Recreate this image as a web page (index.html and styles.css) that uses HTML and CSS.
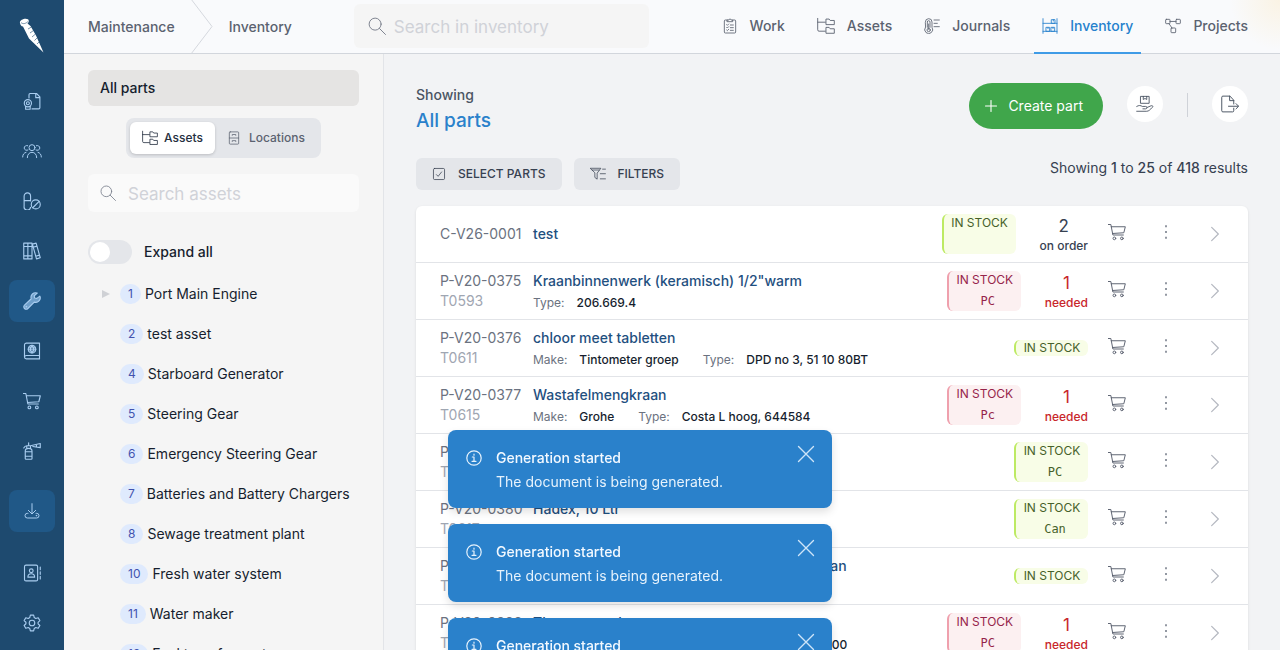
FILE: index.html
```html
<!DOCTYPE html>
<html lang="en">
<head>
<meta charset="utf-8">
<title>Inventory</title>
<link rel="stylesheet" href="styles.css">
</head>
<body>
<svg class="sprite" aria-hidden="true">
  <symbol id="cert" viewBox="0 0 24 24"><path d="M8 8V3.5A1.5 1.5 0 0 1 9.500 2H18l4.500 4.500V21a1.500 1.500 0 0 1-1.500 1.500h-9M17 2.500V7.500h5"/><circle cx="6.500" cy="15" r="4.800"/><circle cx="6.500" cy="15" r="2"/><path d="M3.500 19v4h6v-4"/></symbol>
  <symbol id="users" viewBox="0 0 30 24"><circle cx="15" cy="7" r="4.500"/><path d="M8 22c0-5 3-8 7-8s7 3 7 8M9 10.500A3.700 3.700 0 1 1 8.500 4M21 10.500A3.700 3.700 0 1 0 21.500 4M1 21c0-3.500 2-6.500 5-7M29 21c0-3.500-2-6.500-5-7"/></symbol>
  <symbol id="pills" viewBox="0 0 24 24"><path d="M10 20.500A4.300 4.300 0 0 1 1.500 19V5.500a4.300 4.300 0 0 1 8.600 0V12M1.500 11.500h8.600"/><circle cx="17" cy="16.500" r="6"/><path d="M13 21l8.500-8.500"/></symbol>
  <symbol id="books" viewBox="0 0 24 24"><path d="M1 1.500h5.500v21H1zM6.500 1.500H12v21H6.500zM1 6h11M1 18.500h11M12.500 2.800l5-1.300 5.500 19.500-5 1.500zM13.500 7l5-1.500M17 19l5-1.500"/></symbol>
  <symbol id="wrench" viewBox="0 0 24 24"><path fill="#6f9fca" d="M22.500 5.500l-4 3-3-.500-.500-3 4-3.500a6 6 0 0 0-8 7.500L2 17.500a3 3 0 0 0 4.500 4.500l8.500-8.500a6 6 0 0 0 7.500-8z"/><circle cx="4.500" cy="19.500" r=".5"/></symbol>
  <symbol id="passport" viewBox="0 0 24 24"><path d="M22 18V1.500H4.500A2.500 2.500 0 0 0 2 4v16a2.500 2.500 0 0 0 2.500 2.500H22V18H4.500A2.500 2.500 0 0 0 2 20"/><circle cx="12" cy="9.500" r="5"/><path d="M7 9.500h10M12 4.500c-3 3-3 7 0 10M12 4.500c3 3 3 7 0 10M8 7h8M8 12h8"/></symbol>
  <symbol id="cart" viewBox="0 0 24 24"><path d="M.5 2h3.300l2.700 14h14M4.300 5h18.800l-2 8-15.200 1"/><circle cx="8.500" cy="20.500" r="1.800"/><circle cx="18.500" cy="20.500" r="1.800"/></symbol>
  <symbol id="spray" viewBox="0 0 24 24"><path d="M3 22V12c0-2 1.500-3.500 4.500-3.500S12 10 12 12v10a1 1 0 0 1-1 1H4a1 1 0 0 1-1-1zM3 13h9M3 19h9M5 8.500V5h5v3.500M1 8c1-2 3-3 4-3M7.500 5V1M10 5l13-3v5.500L13 6M18 3.500V6.500"/></symbol>
  <symbol id="download" viewBox="0 0 24 24"><path d="M12 1v15M6.500 11l5.500 5.500 5.500-5.500M6 15.500H5a3.500 3.500 0 0 0 0 7h14a3.500 3.500 0 0 0 0-7h-1"/><circle cx="18.500" cy="19" r=".5"/></symbol>
  <symbol id="contact" viewBox="0 0 24 24"><rect x="2" y="1.500" width="17.500" height="21" rx="2"/><circle cx="11" cy="9" r="2.500"/><path d="M6.500 17.500c0-3 2-4.500 4.500-4.500s4.500 1.500 4.500 4.500zM23 4v3.500M23 10.300v3.500M23 16.500V20"/></symbol>
  <symbol id="gear" viewBox="0 0 24 24"><circle cx="12" cy="12" r="3.700"/><path d="M9.800 1.500h4.400l.8 3.300 2 1.200 3.300-1 2.200 3.800-2.400 2.300v2l2.400 2.200-2.200 3.800-3.300-1-2 1.200-.8 3.200H9.800L9 19.300l-2-1.200-3.300 1-2.200-3.800L3.900 13v-2L1.500 8.800 3.700 5 7 6l2-1.200z"/></symbol>
  <symbol id="search" viewBox="0 0 24 24"><circle cx="9.500" cy="9.500" r="8"/><path d="M15.300 15.300l8 8"/></symbol>
  <symbol id="clipboard" viewBox="0 0 24 24"><path d="M8 3H5a1.500 1.500 0 0 0-1.500 1.500V21A1.500 1.500 0 0 0 5 22.500h14a1.500 1.500 0 0 0 1.500-1.500V4.500A1.500 1.500 0 0 0 19 3h-3M8 5.500h8V3h-2.500a1.500 1.500 0 0 0-3 0H8zM7 10l1 1 2-2M12.500 10.500H17M7 14l1 1 2-2M12.500 14.500H17M7 18l1 1 2-2M12.500 18.500H17"/></symbol>
  <symbol id="tree" viewBox="0 0 26 24"><path d="M1 1v16.500a2 2 0 0 0 2 2h9M1 6.500h11M13.500 2h4l1.500 2h6v6H13.500zM13.500 14h4l1.500 2h6v6.500H13.500z"/></symbol>
  <symbol id="thermo" viewBox="0 0 24 24"><path d="M2 6a5 5 0 0 1 10 0v8a6 6 0 1 1-10 0zM5 14V6a2 2 0 0 1 4 0v8M7 9v8M15 3h8M15 8h5M15 13h8"/><circle cx="7" cy="18" r="2.500"/></symbol>
  <symbol id="shelf" viewBox="0 0 24 24"><path d="M1.500 1v22M22.500 1v22M1.500 8h21M1.500 20h21M14.500 2.500h5V8h-5zM6.500 14h5v6h-5zM14 14h5v6h-5zM17 2.500v2M9 14v2M16.500 14v2"/></symbol>
  <symbol id="flow" viewBox="0 0 24 24"><rect x="1" y="2" width="6.500" height="6.500" rx="1"/><rect x="16.500" y="2" width="6.500" height="6.500" rx="1"/><rect x="9" y="15" width="7" height="7" rx="1"/><path d="M7.500 5.200h9M6 8.500l4.500 6.500"/></symbol>
  <symbol id="cabinet" viewBox="0 0 24 24"><rect x="4" y="1.500" width="16" height="21" rx="1.500"/><path d="M4 12h16M9 7.500V6h6v1.500M9 18v-1.500h6V18"/></symbol>
  <symbol id="check" viewBox="0 0 24 24"><rect x="2.500" y="2.500" width="19" height="19" rx="2"/><path d="M7.500 13l3 3L16.500 8.500"/></symbol>
  <symbol id="filter" viewBox="0 0 28 24"><path d="M1 2h18l-6.500 8.500V21l-4-3v-7.500zM4 5h12M22 3.500h5M18 11.500h9M18 20.500h9"/></symbol>
  <symbol id="plus" viewBox="0 0 24 24"><path d="M12 1v22M1 12h22"/></symbol>
  <symbol id="hand" viewBox="0 0 26 24"><path d="M7 1h12v10H7zM10.500 1v4.500l2.500-1.500 2.500 1.500V1M1 15.500c3-2 6-1.500 8 0h5a1.700 1.700 0 0 1 0 3.500H10M16 17l6-2.500c2-.5 3.300 1 1.500 2.500-3 3-5 5.500-8 5.500H1"/></symbol>
  <symbol id="export" viewBox="0 0 24 24"><path d="M17 17.500V21a1.500 1.500 0 0 1-1.500 1.500h-13A1.500 1.500 0 0 1 1 21V3a1.500 1.500 0 0 1 1.500-1.500H12l5 5.500v5M11.500 1.500V7.500H17M10 15h13M20 11.500l3.500 3.500-3.500 3.500"/></symbol>
  <symbol id="dots" viewBox="0 0 24 24"><path class="solid" d="M10.500 2h3v3h-3zM10.500 10.500h3v3h-3zM10.500 19h3v3h-3z"/></symbol>
  <symbol id="chevron" viewBox="0 0 24 24"><path d="M7 2l10 10L7 22"/></symbol>
  <symbol id="info" viewBox="0 0 24 24"><circle cx="12" cy="12" r="10.800"/><path d="M9.500 10.500H12V17M9 17h6M12 6.200v1.600"/></symbol>
  <symbol id="close" viewBox="0 0 24 24"><path d="M2 2l20 20M22 2L2 22"/></symbol>
</svg>
<div class="app">
  <nav class="rail" aria-label="Modules">
    <a class="logo" href="#" aria-label="Home"><svg width="26" height="36" viewBox="0 0 26 36"><path fill="#fff" d="M1 5C0 2 6-.500 9 1.200c1.500 1.500.500 3.300-.500 4.300L11.500 8 17 17.500l7.500 17L10 20.500 4 8.500C2 8.500 1.300 6.500 1 5z"/><path fill="none" stroke="#1e4a6f" stroke-width=".6" d="M2 4.500c2 2 5 1 7-1M9 11l3.500-2M11 15l3.500-2.500M13 19l3.500-3M15.500 22.500l2.500-2.500M18 26l2-2"/></svg></a>
    <a class="rail-item" href="#" aria-label="Certificates"><svg class="icon i18"><use href="#cert"/></svg></a>
    <a class="rail-item" href="#" aria-label="Crew"><svg class="icon i20"><use href="#users"/></svg></a>
    <a class="rail-item" href="#" aria-label="Medicine"><svg class="icon i18"><use href="#pills"/></svg></a>
    <a class="rail-item" href="#" aria-label="Library"><svg class="icon i18"><use href="#books"/></svg></a>
    <a class="rail-item current" href="#" aria-label="Maintenance"><svg class="icon i18"><use href="#wrench"/></svg></a>
    <a class="rail-item" href="#" aria-label="Logbook"><svg class="icon i18"><use href="#passport"/></svg></a>
    <a class="rail-item" href="#" aria-label="Purchasing"><svg class="icon i18"><use href="#cart"/></svg></a>
    <a class="rail-item" href="#" aria-label="Safety"><svg class="icon i18"><use href="#spray"/></svg></a>
    <a class="rail-item current spaced" href="#" aria-label="Downloads"><svg class="icon i16"><use href="#download"/></svg></a>
    <a class="rail-item spaced-end" href="#" aria-label="Contacts"><svg class="icon i18"><use href="#contact"/></svg></a>
    <a class="rail-item" href="#" aria-label="Settings"><svg class="icon i18"><use href="#gear"/></svg></a>
  </nav>
  <div class="page">
    <header class="topbar">
      <nav class="crumbs" aria-label="Breadcrumb">
        <a href="#">Maintenance</a>
        <svg class="crumb-sep" width="24" height="53" viewBox="0 0 24 53"><path d="M1 -1L22 26.500 1 54"/></svg>
        <a href="#">Inventory</a>
      </nav>
      <label class="search top-search"><svg class="icon i18"><use href="#search"/></svg><input type="search" placeholder="Search in inventory" aria-label="Search in inventory"></label>
      <nav class="tabs" aria-label="Sections">
        <a href="#"><svg class="icon i16"><use href="#clipboard"/></svg>Work</a>
        <a href="#"><svg class="icon i18"><use href="#tree"/></svg>Assets</a>
        <a href="#"><svg class="icon i16"><use href="#thermo"/></svg>Journals</a>
        <a href="#" class="active" aria-current="page"><svg class="icon i16"><use href="#shelf"/></svg>Inventory</a>
        <a href="#"><svg class="icon i16"><use href="#flow"/></svg>Projects</a>
      </nav>
    </header>
    <div class="body">
      <aside class="side">
        <a class="all-parts" href="#">All parts</a>
        <div class="segment">
          <button type="button" class="on"><svg class="icon i16"><use href="#tree"/></svg>Assets</button>
          <button type="button"><svg class="icon i14"><use href="#cabinet"/></svg>Locations</button>
        </div>
        <label class="search side-search"><svg class="icon i16"><use href="#search"/></svg><input type="search" placeholder="Search assets" aria-label="Search assets"></label>
        <label class="toggle"><input type="checkbox">Expand all</label>
        <ul class="tree">
          <li><button type="button" class="expander" aria-label="Expand"></button><a href="#"><span class="num">1</span>Port Main Engine</a></li>
          <li><a href="#"><span class="num">2</span>test asset</a></li>
          <li><a href="#"><span class="num">4</span>Starboard Generator</a></li>
          <li><a href="#"><span class="num">5</span>Steering Gear</a></li>
          <li><a href="#"><span class="num">6</span>Emergency Steering Gear</a></li>
          <li><a href="#"><span class="num">7</span>Batteries and Battery Chargers</a></li>
          <li><a href="#"><span class="num">8</span>Sewage treatment plant</a></li>
          <li><a href="#"><span class="num">10</span>Fresh water system</a></li>
          <li><a href="#"><span class="num">11</span>Water maker</a></li>
          <li><a href="#"><span class="num">12</span>Fuel transfer system</a></li>
        </ul>
      </aside>
      <main class="main">
        <div class="heading">
          <div><p class="eyebrow">Showing</p><h1>All parts</h1></div>
          <div class="actions">
            <button type="button" class="create"><svg class="icon i12"><use href="#plus"/></svg>Create part</button>
            <button type="button" class="round" aria-label="Receive parts"><svg class="icon i18"><use href="#hand"/></svg></button>
            <span class="divider"></span>
            <button type="button" class="round" aria-label="Export"><svg class="icon i18"><use href="#export"/></svg></button>
          </div>
        </div>
        <div class="tools">
          <button type="button"><svg class="icon i14"><use href="#check"/></svg>SELECT PARTS</button>
          <button type="button"><svg class="icon i16"><use href="#filter"/></svg>FILTERS</button>
          <p>Showing <b>1</b> to <b>25</b> of <b>418</b> results</p>
        </div>
        <ul class="parts">
          <li>
            <div class="code">C-V26-0001</div>
            <div class="info"><a href="#">test</a></div>
            <div class="stock ok"><span>IN STOCK</span></div><div class="count"><b>2</b>on order</div>
            <button type="button" class="cart" aria-label="Add to cart"><svg class="icon i18"><use href="#cart"/></svg></button><button type="button" class="more" aria-label="More"><svg class="icon i16"><use href="#dots"/></svg></button><a class="open" href="#" aria-label="Open"><svg class="icon i16"><use href="#chevron"/></svg></a>
          </li>
          <li>
            <div class="code">P-V20-0375<small>T0593</small></div>
            <div class="info"><a href="#">Kraanbinnenwerk (keramisch) 1/2"warm</a><dl><dt>Type:</dt><dd>206.669.4</dd></dl></div>
            <div class="stock low"><span>IN STOCK</span><code>PC</code></div><div class="count need"><b>1</b>needed</div>
            <button type="button" class="cart" aria-label="Add to cart"><svg class="icon i18"><use href="#cart"/></svg></button><button type="button" class="more" aria-label="More"><svg class="icon i16"><use href="#dots"/></svg></button><a class="open" href="#" aria-label="Open"><svg class="icon i16"><use href="#chevron"/></svg></a>
          </li>
          <li>
            <div class="code">P-V20-0376<small>T0611</small></div>
            <div class="info"><a href="#">chloor meet tabletten</a><dl><dt>Make:</dt><dd>Tintometer groep</dd><dt>Type:</dt><dd>DPD no 3, 51 10 80BT</dd></dl></div>
            <div class="stock ok single"><span>IN STOCK</span></div>
            <button type="button" class="cart" aria-label="Add to cart"><svg class="icon i18"><use href="#cart"/></svg></button><button type="button" class="more" aria-label="More"><svg class="icon i16"><use href="#dots"/></svg></button><a class="open" href="#" aria-label="Open"><svg class="icon i16"><use href="#chevron"/></svg></a>
          </li>
          <li>
            <div class="code">P-V20-0377<small>T0615</small></div>
            <div class="info"><a href="#">Wastafelmengkraan</a><dl><dt>Make:</dt><dd>Grohe</dd><dt>Type:</dt><dd>Costa L hoog, 644584</dd></dl></div>
            <div class="stock low"><span>IN STOCK</span><code>Pc</code></div><div class="count need"><b>1</b>needed</div>
            <button type="button" class="cart" aria-label="Add to cart"><svg class="icon i18"><use href="#cart"/></svg></button><button type="button" class="more" aria-label="More"><svg class="icon i16"><use href="#dots"/></svg></button><a class="open" href="#" aria-label="Open"><svg class="icon i16"><use href="#chevron"/></svg></a>
          </li>
          <li>
            <div class="code">P-V20-0379<small>T0616</small></div>
            <div class="info"></div>
            <div class="stock ok"><span>IN STOCK</span><code>PC</code></div>
            <button type="button" class="cart" aria-label="Add to cart"><svg class="icon i18"><use href="#cart"/></svg></button><button type="button" class="more" aria-label="More"><svg class="icon i16"><use href="#dots"/></svg></button><a class="open" href="#" aria-label="Open"><svg class="icon i16"><use href="#chevron"/></svg></a>
          </li>
          <li>
            <div class="code">P-V20-0380<small>T0617</small></div>
            <div class="info"><a href="#">Hadex, 10 Ltr</a><dl><dt>Make:</dt><dd>Hadex</dd></dl></div>
            <div class="stock ok"><span>IN STOCK</span><code>Can</code></div>
            <button type="button" class="cart" aria-label="Add to cart"><svg class="icon i18"><use href="#cart"/></svg></button><button type="button" class="more" aria-label="More"><svg class="icon i16"><use href="#dots"/></svg></button><a class="open" href="#" aria-label="Open"><svg class="icon i16"><use href="#chevron"/></svg></a>
          </li>
          <li>
            <div class="code">P-V20-0381<small>T0618</small></div>
            <div class="info"><a href="#">Reparatieset, voor thermostatische mengkraan</a><dl><dt>Make:</dt><dd>Grohe</dd></dl></div>
            <div class="stock ok single"><span>IN STOCK</span></div>
            <button type="button" class="cart" aria-label="Add to cart"><svg class="icon i18"><use href="#cart"/></svg></button><button type="button" class="more" aria-label="More"><svg class="icon i16"><use href="#dots"/></svg></button><a class="open" href="#" aria-label="Open"><svg class="icon i16"><use href="#chevron"/></svg></a>
          </li>
          <li>
            <div class="code">P-V20-0382<small>T0619</small></div>
            <div class="info"><a href="#">Thermostaatkraan</a><dl><dt>Make:</dt><dd>Grohe</dd><dt>Type:</dt><dd>Grohtherm 1000, 341550000</dd></dl></div>
            <div class="stock low"><span>IN STOCK</span><code>PC</code></div><div class="count need"><b>1</b>needed</div>
            <button type="button" class="cart" aria-label="Add to cart"><svg class="icon i18"><use href="#cart"/></svg></button><button type="button" class="more" aria-label="More"><svg class="icon i16"><use href="#dots"/></svg></button><a class="open" href="#" aria-label="Open"><svg class="icon i16"><use href="#chevron"/></svg></a>
          </li>
        </ul>
      </main>
    </div>
  </div>
</div>
<div class="toasts" role="status">
  <div class="toast"><svg class="icon i16"><use href="#info"/></svg><div><strong>Generation started</strong><p>The document is being generated.</p></div><button type="button" aria-label="Close"><svg class="icon i18"><use href="#close"/></svg></button></div>
  <div class="toast"><svg class="icon i16"><use href="#info"/></svg><div><strong>Generation started</strong><p>The document is being generated.</p></div><button type="button" aria-label="Close"><svg class="icon i18"><use href="#close"/></svg></button></div>
  <div class="toast"><svg class="icon i16"><use href="#info"/></svg><div><strong>Generation started</strong><p>The document is being generated.</p></div><button type="button" aria-label="Close"><svg class="icon i18"><use href="#close"/></svg></button></div>
</div>
</body>
</html>
```
FILE: styles.css
```css
* { box-sizing: border-box; }
body { margin: 0; overflow: hidden; font: 14px/20px Inter, "Liberation Sans", sans-serif; color: #161e2e; background: #f2f3f5; }
p, h1, ul, dl, dd { margin: 0; padding: 0; }
ul { list-style: none; }
a { color: inherit; text-decoration: none; }
button { font: inherit; color: inherit; border: 0; padding: 0; background: none; display: flex; align-items: center; justify-content: center; }
input { font: inherit; color: inherit; }
.sprite { display: none; }
.icon { fill: none; stroke: currentColor; stroke-width: 1.3; stroke-linecap: round; stroke-linejoin: round; flex: none; }
.solid { fill: currentColor; stroke: none; }
.i12 { width: 12px; height: 12px; }
.i14 { width: 14px; height: 14px; }
.i16 { width: 16px; height: 16px; }
.i18 { width: 18px; height: 18px; }
.i20 { width: 20px; height: 20px; }

.app { display: flex; height: 100vh; }
.rail { width: 64px; flex: none; background: #1e4a6f; color: #a9cdf0; display: flex; flex-direction: column; align-items: center; gap: 8px; overflow: hidden; }
.rail .icon { stroke-width: 1.5; }
.logo { height: 72px; padding-top: 18px; flex: none; }
.rail-item { width: 46px; height: 42px; flex: none; border-radius: 8px; display: flex; align-items: center; justify-content: center; }
.current { background: #205887; }
.spaced { margin-top: 10px; }
.spaced-end { margin-top: 12px; }

.page { flex: 1; min-width: 0; display: flex; flex-direction: column; }
.topbar { height: 54px; flex: none; display: flex; align-items: stretch; padding: 0 32px 0 24px; border-bottom: 1px solid #d2d6dc; background: radial-gradient(circle at 100% 0, #faf3e4 0, #f9fafc 50px); color: #5b6270; font-weight: 500; }
.crumbs { display: flex; align-items: center; gap: 15px; }
.crumb-sep { fill: none; stroke: #d5d8de; stroke-width: 1; }
.search { display: flex; align-items: center; border-radius: 6px; color: #7c828e; font-weight: 400; }
.search input { flex: 1; min-width: 0; border: 0; outline: 0; padding: 2px 0 0; background: none; font-size: 17px; line-height: 28px; }
.search input::placeholder { color: #d0d2d8; opacity: 1; }
.top-search { width: 295px; margin: 4px 0 5px 62px; padding: 0 14px; gap: 8px; background: #f5f5f5; }
.tabs { margin-left: auto; display: flex; gap: 16px; }
.tabs a { display: flex; align-items: center; gap: 12px; padding: 0 8px; border-bottom: 2px solid transparent; margin-bottom: -1px; }
.tabs a:last-child { padding-right: 0; }
.tabs .active { color: #2681cd; border-color: #3f9be6; }

.body { flex: 1; min-height: 0; display: flex; }
.side { width: 320px; flex: none; padding: 16px 24px 0; border-right: 1px solid #e2e4e8; background: #f5f5f5; overflow: hidden; display: flex; flex-direction: column; }
.all-parts { background: #e5e4e3; border-radius: 6px; padding: 8px 12px; font-weight: 500; }
.segment { align-self: center; display: flex; margin-top: 12px; padding: 4px; border-radius: 8px; background: #e4e6ea; color: #5b6270; font-size: 12px; font-weight: 500; }
.segment button { height: 32px; gap: 6px; padding: 0 12px; border-radius: 6px; }
.segment button + button { gap: 8px; }
.segment .on { background: #fff; color: #252f3f; box-shadow: 0 1px 3px rgba(0,0,0,.18); }
.side-search { height: 38px; flex: none; margin-top: 16px; padding: 0 12px; gap: 12px; background: #fafafa; color: #7c828e; }
.toggle { display: flex; align-items: center; gap: 12px; margin-top: 28px; font-weight: 500; }
.toggle input { appearance: none; width: 44px; height: 24px; margin: 0; border-radius: 12px; background: #e4e6ea; }
.toggle input::before { content: ""; display: block; width: 20px; height: 20px; margin: 2px; border-radius: 50%; background: #fff; }
.tree { margin-top: 10px; }
.tree li { position: relative; height: 40px; display: flex; align-items: center; padding-left: 32px; white-space: nowrap; }
.tree a { display: flex; align-items: center; gap: 4px; }
.num { padding: 0 8px; border-radius: 10px; background: #dfeafd; color: #4253af; font-size: 12px; line-height: 20px; }
.expander { position: absolute; left: 14px; border-left: 8px solid #cfd1d5; border-top: 4px solid transparent; border-bottom: 4px solid transparent; }

.main { flex: 1; min-width: 0; padding: 29px 32px 0; overflow: hidden; }
.heading { display: flex; justify-content: space-between; align-items: flex-start; }
.eyebrow { color: #4b5563; font-weight: 500; margin-top: 2px; }
h1 { color: #2a81cb; font-size: 19px; line-height: 28px; font-weight: 500; margin-top: 2px; }
.actions { display: flex; align-items: flex-start; gap: 24px; }
.create { height: 46px; padding: 0 20px 0 16px; gap: 11px; border-radius: 23px; background: #40a64b; color: #fff; }
.create .icon { stroke-width: 2.2; }
.round { width: 36px; height: 36px; margin-top: 3px; border-radius: 50%; background: #fff; color: #4b5563; }
.divider { width: 1px; height: 24px; margin-top: 10px; background: #cfd2d8; }
.tools { display: flex; align-items: flex-start; gap: 12px; margin-top: 23px; }
.tools button { height: 32px; padding: 0 16px; gap: 12px; border-radius: 6px; background: #e4e6ea; color: #374151; font-size: 12px; font-weight: 500; }
.tools p { margin-left: auto; color: #374151; }
.tools b { font-weight: 500; }
.parts { margin-top: 16px; border-radius: 6px; background: #fff; box-shadow: 0 1px 3px rgba(0,0,0,.1); }
.parts li { height: 57px; padding: 8px 25px 8px 24px; display: flex; align-items: center; border-bottom: 1px solid #e2e4e8; white-space: nowrap; }
.code { width: 93px; flex: none; color: #6b7280; }
.code small { display: block; font-size: 14px; color: #9fa6b2; }
.info { flex: 1; min-width: 0; align-self: stretch; display: flex; flex-direction: column; justify-content: safe center; color: #1f5080; font-weight: 500; }
.info dl { display: flex; font-size: 12px; margin-top: 2px; }
.info dt { color: #6b7280; margin-right: 12px; font-weight: 400; }
.info dd { color: #161e2e; margin-right: 24px; }
.stock { width: 74px; height: 40px; flex: none; border-radius: 6px; border-left: 2px solid; font-size: 12px; line-height: 18px; display: flex; flex-direction: column; align-items: center; }
.stock code { padding-left: 6px; font: 12px/24px "DejaVu Sans Mono", monospace; }
.stock.single { height: 16px; line-height: 16px; }
.ok { background: #f8fde7; border-color: #bdea63; color: #46612a; }
.low { background: #fcf0f1; border-color: #efa0ad; color: #96244a; }
.count { margin-left: 24px; flex: none; text-align: center; font-size: 12px; line-height: 16px; font-weight: 500; color: #374151; }
.count b { display: block; font-size: 17px; line-height: 24px; font-weight: 400; }
.need { color: #c8262b; }
.cart { margin: 0 0 4px 20px; color: #5b6270; }
.more { margin: 0 0 4px 32px; color: #9298a2; }
.open { margin-left: 33px; color: #b4b8c0; display: flex; }
.open .icon { stroke-width: 1.8; }

.toasts { position: fixed; left: 448px; top: 430px; display: grid; gap: 16px; width: 384px; }
.toast { display: flex; gap: 14px; padding: 15px 17px 14px 18px; border-radius: 8px; background: #2a81cb; color: #e6f2fc; box-shadow: 0 4px 8px rgba(0,0,0,.12); }
.toast > .icon { margin-top: 5px; stroke-width: 1.8; }
.toast div { flex: 1; padding-top: 1px; line-height: 24px; }
.toast strong { font-weight: 500; color: #f3f9ff; }
.toast button { align-self: flex-start; color: #cfe5f8; }
.toast button .icon { stroke-width: 1.8; }
```
